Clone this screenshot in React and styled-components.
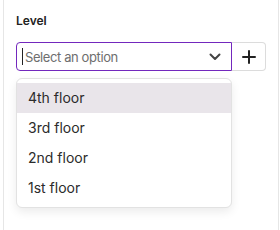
import styled, { createGlobalStyle } from 'styled-components';

const GlobalStyle = createGlobalStyle`
  body {
    margin: 0;
    background: #ffffff;
    font-family: Inter, "Noto Sans", sans-serif;
  }
`;

const Panel = styled.div`
  box-sizing: border-box;
  height: 230px;
  margin: 0 1px 0 3px;
  border-left: 1px solid #e6e6e6;
  border-right: 1px solid #e6e6e6;
  padding: 13px 12px 0 12px;
`;

const Label = styled.div`
  font-size: 12px;
  line-height: 16px;
  font-weight: 600;
  color: #222222;
  margin-bottom: 13px;
`;

const Row = styled.div`
  display: flex;
  height: 29px;
`;

const SelectWrap = styled.div`
  position: relative;
  flex: 1;
`;

const SelectBox = styled.div`
  box-sizing: border-box;
  height: 29px;
  display: flex;
  align-items: center;
  border: 1px solid #7328bd;
  border-radius: 4px 0 0 4px;
  padding: 0 10px 0 5px;
  font-size: 13px;
  letter-spacing: -0.4px;
  color: #6e6e6e;
`;

const Caret = styled.span`
  width: 1px;
  height: 17px;
  background: #222;
  margin-right: 2px;
`;

const Placeholder = styled.span`
  flex: 1;
`;

const AddButton = styled.button`
  box-sizing: border-box;
  width: 34px;
  height: 29px;
  border: 1px solid #dcdcdc;
  border-left: none;
  border-radius: 0 4px 4px 0;
  background: #fff;
  display: flex;
  align-items: center;
  justify-content: center;
  padding: 0;
`;

const Menu = styled.ul`
  position: absolute;
  top: 36px;
  left: 0;
  right: 0;
  margin: 0;
  padding: 4px 0;
  list-style: none;
  background: #fff;
  border: 1px solid #e2e2e2;
  border-radius: 6px;
  box-shadow: 0 4px 10px rgba(0, 0, 0, 0.08);
`;

const Option = styled.li`
  height: 30px;
  line-height: 30px;
  padding: 0 11px;
  font-size: 14px;
  color: #2b2b2b;
  background: ${(p) => (p.$active ? '#e9e5ea' : 'transparent')};
`;

const floors = ['4th floor', '3rd floor', '2nd floor', '1st floor'];

export default function App() {
  return (
    <>
      <GlobalStyle />
      <Panel>
        <Label>Level</Label>
        <Row>
          <SelectWrap>
            <SelectBox>
              <Caret />
              <Placeholder>Select an option</Placeholder>
              <svg width="12" height="8" viewBox="0 0 12 8">
                <path d="M1.5 1.5 6 6l4.5-4.5" fill="none" stroke="#444" strokeWidth="2" strokeLinecap="round" strokeLinejoin="round" />
              </svg>
            </SelectBox>
            <Menu>
              {floors.map((f, i) => (
                <Option key={f} $active={i === 0}>{f}</Option>
              ))}
            </Menu>
          </SelectWrap>
          <AddButton aria-label="add">
            <svg width="14" height="14" viewBox="0 0 14 14">
              <path d="M7 1v12M1 7h12" stroke="#222" strokeWidth="2" strokeLinecap="round" />
            </svg>
          </AddButton>
        </Row>
      </Panel>
    </>
  );
}
